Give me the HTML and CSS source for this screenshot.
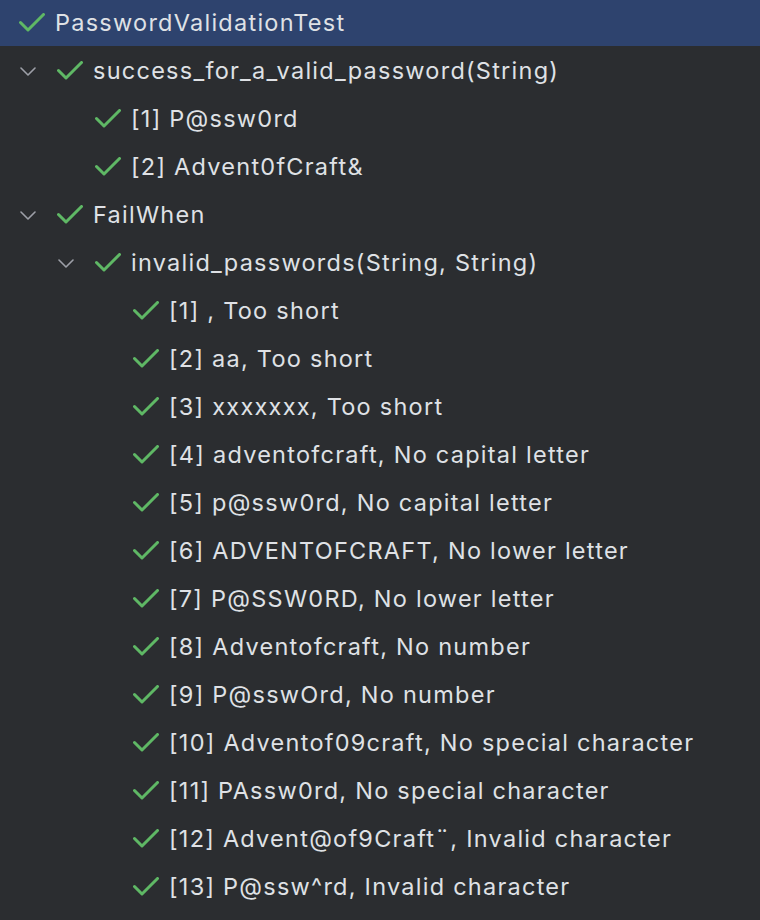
FILE: index.html
```html
<!DOCTYPE html>
<html>
<head>
<meta charset="utf-8">
<link rel="stylesheet" href="styles.css">
</head>
<body>
<svg width="0" height="0" class="defs">
  <defs>
    <symbol id="chk" viewBox="0 0 26 20"><path d="M1.5 9.5 L9 17 L24.5 1.5" fill="none" stroke="currentColor" stroke-width="3" stroke-linecap="round" stroke-linejoin="round"/></symbol>
    <symbol id="chev" viewBox="0 0 16 9"><path d="M1 1 L8 8 L15 1" fill="none" stroke="currentColor" stroke-width="1.6" stroke-linecap="round" stroke-linejoin="round"/></symbol>
  </defs>
</svg>
<div class="tree">
  <div class="row selected d0"><svg class="check"><use href="#chk"/></svg><span class="label">PasswordValidationTest</span></div>
  <div class="row d1 open"><svg class="chev"><use href="#chev"/></svg><svg class="check"><use href="#chk"/></svg><span class="label">success_for_a_valid_password(String)</span></div>
  <div class="row d2"><svg class="check"><use href="#chk"/></svg><span class="label">[1] P@ssw0rd</span></div>
  <div class="row d2"><svg class="check"><use href="#chk"/></svg><span class="label">[2] Advent0fCraft&amp;</span></div>
  <div class="row d1 open"><svg class="chev"><use href="#chev"/></svg><svg class="check"><use href="#chk"/></svg><span class="label">FailWhen</span></div>
  <div class="row d2 open"><svg class="chev"><use href="#chev"/></svg><svg class="check"><use href="#chk"/></svg><span class="label">invalid_passwords(String, String)</span></div>
  <div class="row d3"><svg class="check"><use href="#chk"/></svg><span class="label">[1] , Too short</span></div>
  <div class="row d3"><svg class="check"><use href="#chk"/></svg><span class="label">[2] aa, Too short</span></div>
  <div class="row d3"><svg class="check"><use href="#chk"/></svg><span class="label">[3] xxxxxxx, Too short</span></div>
  <div class="row d3"><svg class="check"><use href="#chk"/></svg><span class="label">[4] adventofcraft, No capital letter</span></div>
  <div class="row d3"><svg class="check"><use href="#chk"/></svg><span class="label">[5] p@ssw0rd, No capital letter</span></div>
  <div class="row d3"><svg class="check"><use href="#chk"/></svg><span class="label">[6] ADVENTOFCRAFT, No lower letter</span></div>
  <div class="row d3"><svg class="check"><use href="#chk"/></svg><span class="label">[7] P@SSW0RD, No lower letter</span></div>
  <div class="row d3"><svg class="check"><use href="#chk"/></svg><span class="label">[8] Adventofcraft, No number</span></div>
  <div class="row d3"><svg class="check"><use href="#chk"/></svg><span class="label">[9] P@sswOrd, No number</span></div>
  <div class="row d3"><svg class="check"><use href="#chk"/></svg><span class="label">[10] Adventof09craft, No special character</span></div>
  <div class="row d3"><svg class="check"><use href="#chk"/></svg><span class="label">[11] PAssw0rd, No special character</span></div>
  <div class="row d3"><svg class="check"><use href="#chk"/></svg><span class="label">[12] Advent@of9Craft¨, Invalid character</span></div>
  <div class="row d3"><svg class="check"><use href="#chk"/></svg><span class="label">[13] P@ssw^rd, Invalid character</span></div>
</div>
</body>
</html>
```
FILE: styles.css
```css
html, body {
  margin: 0;
  padding: 0;
  background: #2b2d30;
  width: 760px;
  height: 920px;
  overflow: hidden;
}
.defs { position: absolute; }
.tree {
  display: flex;
  flex-direction: column;
  font-family: Inter, "Noto Sans", sans-serif;
  font-size: 23.5px;
  letter-spacing: 1.25px;
  color: #dfe1e5;
}
.row {
  display: flex;
  align-items: center;
  height: 48px;
  white-space: nowrap;
}
.row.selected {
  background: #2e436e;
  height: 46px;
  margin-bottom: 1px;
}
.d0 { padding-left: 19px; }
.d1 { padding-left: 57px; }
.d2 { padding-left: 95px; }
.d3 { padding-left: 133px; }
.d1.open { padding-left: 20px; }
.d2.open { padding-left: 58px; }
.chev {
  width: 16px;
  height: 9px;
  color: #9da0a8;
  margin-right: 21px;
  flex: none;
}
.check {
  width: 26px;
  height: 20px;
  color: #5fb865;
  margin-right: 10px;
  flex: none;
}
.label {
  line-height: 48px;
}
```
